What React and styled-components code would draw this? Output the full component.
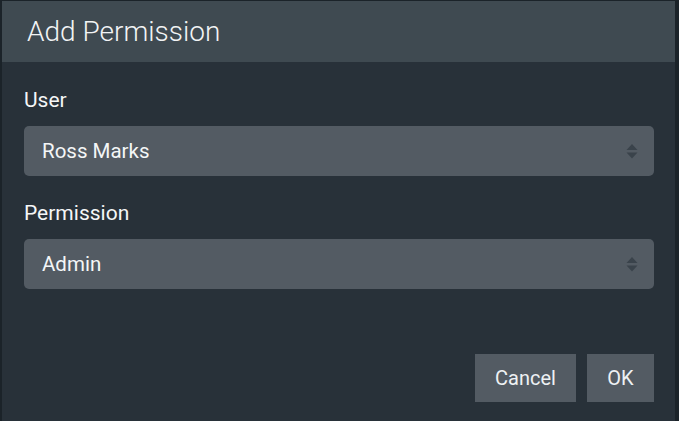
import React from 'react';
import styled, { createGlobalStyle } from 'styled-components';

const GlobalStyle = createGlobalStyle`
  html, body {
    margin: 0;
    padding: 0;
    background: #1b2329;
    font-family: Roboto, "Liberation Sans", sans-serif;
  }
`

const Page = styled.div`
  width: 679px;
  height: 421px;
  padding: 1px 4px 0 2px;
  box-sizing: border-box;
  overflow: hidden;
`
const Dialog = styled.div`
  background: #283139;
  height: 100%;
  display: flex;
  flex-direction: column;
`
const Header = styled.div`
  background: #3f4a51;
  height: 61px;
  display: flex;
  align-items: center;
  padding: 0 25px;
  box-sizing: border-box;
`
const Title = styled.h2`
  margin: 0;
  color: #f2f4f5;
  font-size: 28px;
  font-weight: 300;
`
const Body = styled.div`
  padding: 27px 21px 0 22px;
  display: flex;
  flex-direction: column;
`
const Field = styled.div`
  margin-bottom: 26px;
`
const Label = styled.label`
  display: block;
  color: #f4f6f7;
  font-size: 21px;
  line-height: 22px;
  margin-bottom: 15px;
`
const Select = styled.div`
  height: 50px;
  border-radius: 5px;
  background: #535b63;
  display: flex;
  align-items: center;
  justify-content: space-between;
  padding: 0 16px 0 18px;
  color: #f4f6f7;
  font-size: 20.5px;
`
const Footer = styled.div`
  display: flex;
  justify-content: flex-end;
  gap: 11px;
  padding: 39px 21px 0 0;
`
const Button = styled.button`
  height: 48px;
  padding: 0 19px;
  min-width: ${props => props.wide ? '101px' : '67px'};
  border: none;
  background: #535b63;
  color: #eef1f3;
  font-family: inherit;
  font-size: 20px;
  cursor: pointer;
`

const SortArrows = () => (
  <svg width="12" height="15" viewBox="0 0 12 15">
    <path d="M6 0 L11.5 6 L0.5 6 Z" fill="#3a434b" />
    <path d="M0.5 8.5 L11.5 8.5 L6 14.5 Z" fill="#3a434b" />
  </svg>
)

export default function App() {
  return (
    <Page>
      <GlobalStyle />
      <Dialog>
        <Header>
          <Title>Add Permission</Title>
        </Header>
        <Body>
          <Field>
            <Label>User</Label>
            <Select>
              <span>Ross Marks</span>
              <SortArrows />
            </Select>
          </Field>
          <Field>
            <Label>Permission</Label>
            <Select>
              <span>Admin</span>
              <SortArrows />
            </Select>
          </Field>
        </Body>
        <Footer>
          <Button wide>Cancel</Button>
          <Button>OK</Button>
        </Footer>
      </Dialog>
    </Page>
  )
}
